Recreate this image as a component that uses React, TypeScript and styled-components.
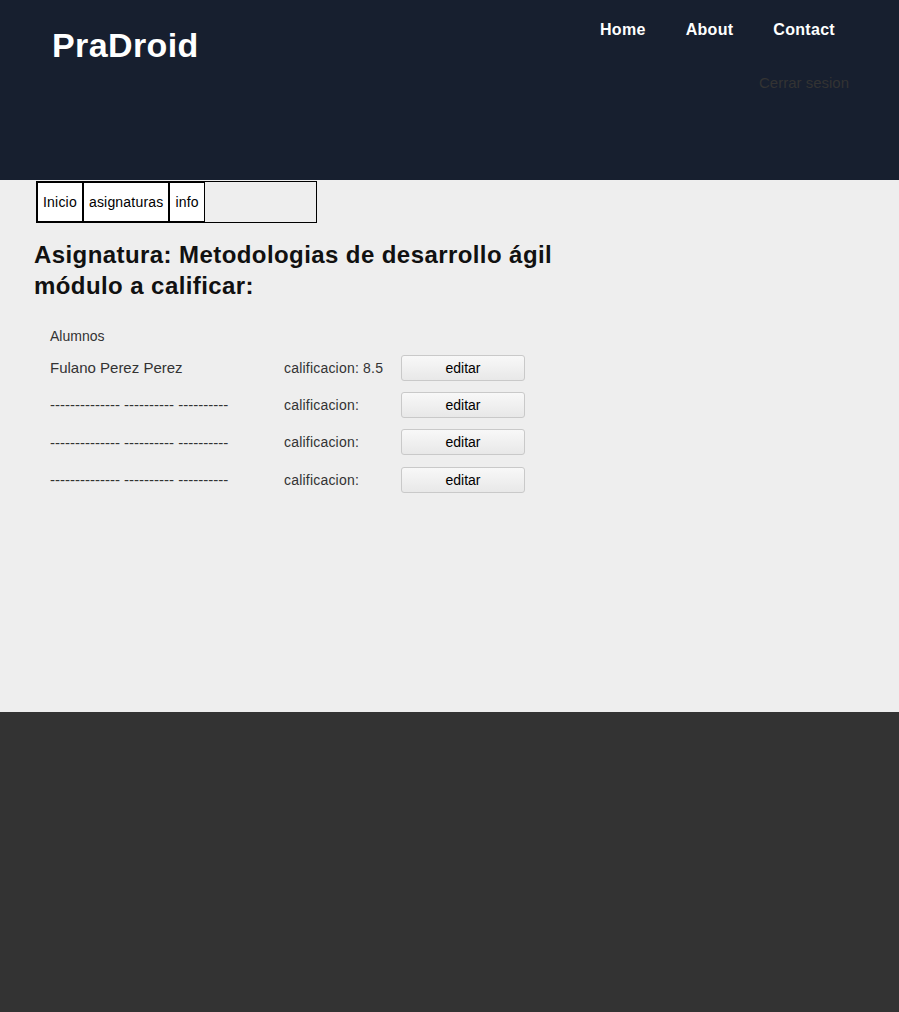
import styled, { createGlobalStyle } from 'styled-components';

const GlobalStyle = createGlobalStyle`
    html, body {
        margin: 0;
        padding: 0;
        background: #333333;
        font-family: "Liberation Sans", Arial, sans-serif;
    }
`;

const Header = styled.header`
    height: 180px;
    background: #171f2f;
    display: flex;
    justify-content: space-between;
    align-items: flex-start;
    box-sizing: border-box;
`;

const Logo = styled.h1`
    margin: 26px 0 0 52px;
    font-size: 34px;
    letter-spacing: 0.4px;
    font-weight: bold;
    color: #ffffff;
    line-height: normal;
`;

const RightSide = styled.div`
    display: flex;
    flex-direction: column;
    align-items: flex-end;
    padding-top: 21px;
`;

const Menu = styled.ul`
    list-style: none;
    margin: 0 44px 0 0;
    padding: 0;
    display: flex;
`;

const MenuItem = styled.li`
    padding: 0 20px;
    font-size: 16px;
    letter-spacing: 0.3px;
    font-weight: bold;
    color: #ffffff;
    line-height: normal;
`;

const Logout = styled.a`
    margin: 35px 50px 0 0;
    font-size: 15px;
    color: #333333;
    text-decoration: none;
    line-height: normal;
`;

const Main = styled.main`
    background: #eeeeee;
    height: 532px;
    padding: 1px 0 0 34px;
    box-sizing: border-box;
`;

const Tabs = styled.nav`
    display: flex;
    width: 281px;
    height: 42px;
    margin-left: 2px;
    border: 1px solid #000000;
    box-sizing: border-box;
`;

const Tab = styled.div`
    display: flex;
    align-items: center;
    padding: 0 5px;
    background: #ffffff;
    border: 1px solid #000000;
    font-size: 14px;
    letter-spacing: 0.2px;
    color: #000000;
`;

const Title = styled.h2`
    margin: 16px 0 0 0;
    font-size: 24px;
    line-height: 31px;
    font-weight: bold;
    color: #111111;
    letter-spacing: 0.42px;
`;

const List = styled.div`
    margin: 25px 0 0 16px;
    display: flex;
    flex-direction: column;
`;

const Caption = styled.div`
    font-size: 14px;
    color: #333333;
    height: 20px;
    line-height: 20px;
    margin-bottom: 3px;
`;

const Row = styled.div`
    display: grid;
    grid-template-columns: 234px 117px 124px;
    align-items: center;
    height: 37.3px;
`;

const Name = styled.span`
    font-size: 15px;
    color: #333333;
`;

const Grade = styled.span`
    font-size: 14px;
    letter-spacing: 0.2px;
    color: #333333;
`;

const EditButton = styled.button`
    height: 26px;
    width: 124px;
    box-sizing: border-box;
    border: 1px solid #c9c9c9;
    border-radius: 3px;
    background: linear-gradient(#f8f8f8, #e8e8e8);
    font-family: "Liberation Sans", Arial, sans-serif;
    font-size: 14px;
    color: #000000;
    padding: 0;
`;

const Footer = styled.footer`
    height: 300px;
    background: #333333;
`;

const students = [
    { name: 'Fulano Perez Perez', grade: 'calificacion: 8.5' },
    { name: '-------------- ---------- ----------', grade: 'calificacion:' },
    { name: '-------------- ---------- ----------', grade: 'calificacion:' },
    { name: '-------------- ---------- ----------', grade: 'calificacion:' },
];

export default function App() {
    return (
        <>
            <GlobalStyle />
            <Header>
                <Logo>PraDroid</Logo>
                <RightSide>
                    <Menu>
                        <MenuItem>Home</MenuItem>
                        <MenuItem>About</MenuItem>
                        <MenuItem>Contact</MenuItem>
                    </Menu>
                    <Logout href="#">Cerrar sesion</Logout>
                </RightSide>
            </Header>
            <Main>
                <Tabs>
                    <Tab>Inicio</Tab>
                    <Tab>asignaturas</Tab>
                    <Tab>info</Tab>
                </Tabs>
                <Title>
                    Asignatura: Metodologias de desarrollo ágil
                    <br />
                    módulo a calificar:
                </Title>
                <List>
                    <Caption>Alumnos</Caption>
                    {students.map((s, i) => (
                        <Row key={i}>
                            <Name>{s.name}</Name>
                            <Grade>{s.grade}</Grade>
                            <EditButton>editar</EditButton>
                        </Row>
                    ))}
                </List>
            </Main>
            <Footer />
        </>
    );
}
